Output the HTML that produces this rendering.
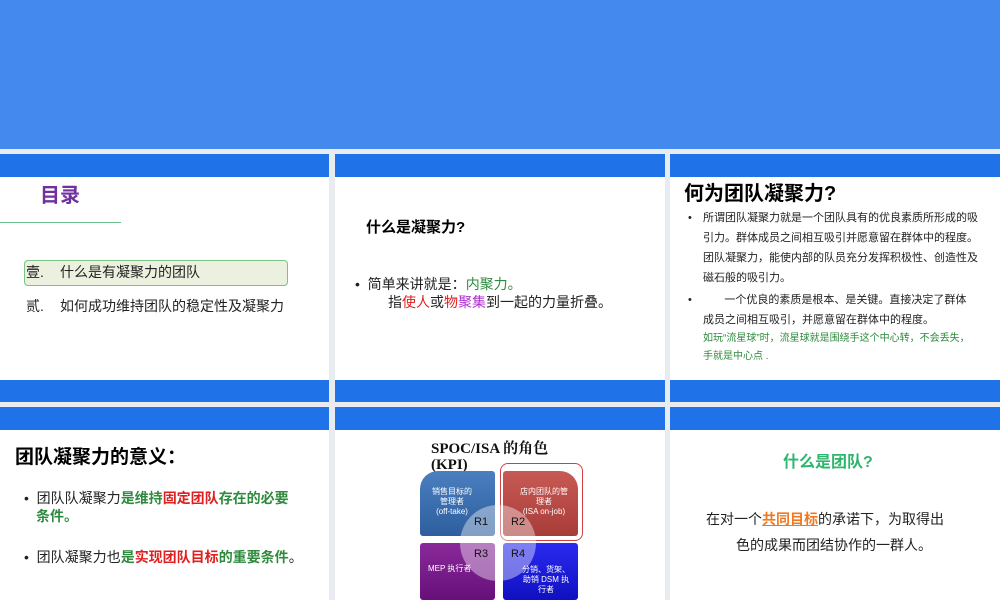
<!DOCTYPE html>
<html><head><meta charset="utf-8"><style>
*{margin:0;padding:0;box-sizing:border-box}
body{width:1000px;height:600px;position:relative;overflow:hidden;background:#e8ecf1;font-family:"Liberation Sans","Noto Sans CJK SC",sans-serif;color:#222}
div,span.a{position:absolute}
.bar{background:#1f72e8}
.w{background:#fff}
.t{white-space:nowrap;line-height:1}
.g{color:#2e8b3e}.r{color:#e02020}.p{color:#b030d0}
</style></head><body>
<div style="left:0;top:0;width:1000px;height:149px;background:#4489ee"></div>
<div class="bar" style="left:0;top:154px;width:329px;height:23px"></div>
<div class="bar" style="left:335px;top:154px;width:330px;height:23px"></div>
<div class="bar" style="left:670px;top:154px;width:330px;height:23px"></div>
<div class="w" style="left:0;top:177px;width:329px;height:203px"></div>
<div class="w" style="left:335px;top:177px;width:330px;height:203px"></div>
<div class="w" style="left:670px;top:177px;width:330px;height:203px"></div>
<div class="bar" style="left:0;top:380px;width:329px;height:22px"></div>
<div class="bar" style="left:335px;top:380px;width:330px;height:22px"></div>
<div class="bar" style="left:670px;top:380px;width:330px;height:22px"></div>
<div class="bar" style="left:0;top:407px;width:329px;height:23px"></div>
<div class="bar" style="left:335px;top:407px;width:330px;height:23px"></div>
<div class="bar" style="left:670px;top:407px;width:330px;height:23px"></div>
<div class="w" style="left:0;top:430px;width:329px;height:170px"></div>
<div class="w" style="left:335px;top:430px;width:330px;height:170px"></div>
<div class="w" style="left:670px;top:430px;width:330px;height:170px"></div>

<div class="t" style="left:40px;top:186px;font-size:20px;font-weight:bold;color:#7030a0">目录</div>
<div style="left:0;top:222px;width:121px;height:1px;background:#6cc090"></div>
<div style="left:24px;top:260px;width:264px;height:26px;background:#ebf1de;border:1px solid #7cc282;border-radius:4px"></div>
<div class="t" style="left:26px;top:265px;font-size:14px">壹.</div>
<div class="t" style="left:60px;top:265px;font-size:14px">什么是有凝聚力的团队</div>
<div class="t" style="left:26px;top:299px;font-size:14px">贰.</div>
<div class="t" style="left:60px;top:299px;font-size:14px">如何成功维持团队的稳定性及凝聚力</div>

<div class="t" style="left:366px;top:220px;font-size:15px;font-weight:bold;color:#000">什么是凝聚力?</div>
<div class="t" style="left:355px;top:277px;font-size:14px">•&nbsp; 简单来讲就是：<span class="g">内聚力。</span></div>
<div class="t" style="left:388px;top:295px;font-size:14px">指<span class="r">使人</span>或<span class="r">物</span><span class="p">聚集</span>到一起的力量折叠。</div>

<div class="t" style="left:684px;top:184px;font-size:20px;font-weight:bold;color:#000">何为团队凝聚力?</div>
<div style="left:688px;top:208px;font-size:11px;line-height:20px;width:300px">
<div style="left:0;top:0;line-height:20px">•</div>
<div class="t" style="left:15px;top:0;line-height:20px">所谓团队凝聚力就是一个团队具有的优良素质所形成的吸<br>引力。群体成员之间相互吸引并愿意留在群体中的程度。<br>团队凝聚力，能使内部的队员充分发挥积极性、创造性及<br>磁石般的吸引力。</div>
<div style="left:0;top:82px;line-height:20px">•</div>
<div class="t" style="left:15px;top:82px;line-height:20px">&nbsp;&nbsp;&nbsp;&nbsp;&nbsp;&nbsp;&nbsp;一个优良的素质是根本、是关键。直接决定了群体<br>成员之间相互吸引，并愿意留在群体中的程度。</div>
<div class="t" style="left:15px;top:122px;font-size:10px;line-height:18px;color:#2e8b3e">如玩“流星球”时，流星球就是围绕手这个中心转，不会丢失，<br>手就是中心点 .</div>
</div>

<div class="t" style="left:15px;top:448px;font-size:19px;font-weight:bold;color:#000">团队凝聚力的意义：</div>
<div class="t" style="left:24px;top:491px;font-size:14px">•&nbsp; 团队队凝聚力<b class="g">是维持</b><b class="r">固定团队</b><b class="g">存在的必要</b></div>
<div class="t" style="left:36px;top:509px;font-size:14px"><b class="g">条件。</b></div>
<div class="t" style="left:24px;top:550px;font-size:14px">•&nbsp; 团队凝聚力也<b class="g">是</b><b class="r">实现团队目标</b><b class="g">的重要条件</b>。</div>

<div class="t" style="left:431px;top:442px;font-size:15px;font-weight:bold;font-family:'Liberation Serif','Noto Serif CJK SC',serif;color:#111">SPOC/ISA 的角色</div>
<div class="t" style="left:431px;top:458px;font-size:15px;font-weight:bold;font-family:'Liberation Serif','Noto Serif CJK SC',serif;color:#111">(KPI)</div>
<div style="left:500px;top:463px;width:83px;height:78px;border:1px solid #d04040;border-radius:8px"></div>
<div style="left:420px;top:471px;width:75px;height:65px;background:linear-gradient(#4a7fc0,#2e5e9e);border-radius:18px 3px 3px 3px"></div>
<div style="left:503px;top:471px;width:75px;height:65px;background:linear-gradient(#c85a55,#a83c38);border-radius:3px 18px 3px 3px"></div>
<div style="left:420px;top:543px;width:75px;height:57px;background:linear-gradient(#8a2a9a,#66107a);border-radius:3px"></div>
<div style="left:503px;top:543px;width:75px;height:57px;background:linear-gradient(#2a2af0,#1010c0);border-radius:3px"></div>
<div style="left:460px;top:505px;width:76px;height:76px;border-radius:50%;background:rgba(255,255,255,0.4)"></div>
<div style="left:420px;top:487px;width:64px;text-align:center;font-size:8px;line-height:10px;color:#fff">销售目标的<br>管理者<br>(off-take)</div>
<div style="left:512px;top:487px;width:64px;text-align:center;font-size:8px;line-height:10px;color:#fff">店内团队的管<br>理者<br>(ISA on-job)</div>
<div class="t" style="left:428px;top:565px;font-size:8px;color:#fff">MEP 执行者</div>
<div style="left:515px;top:565px;width:62px;text-align:center;font-size:8px;line-height:10px;color:#fff">分销、货架、<br>助销 DSM 执<br>行者</div>
<div class="t" style="left:474px;top:517px;font-size:11px;color:#111">R1</div>
<div class="t" style="left:511px;top:517px;font-size:11px;color:#111">R2</div>
<div class="t" style="left:474px;top:549px;font-size:11px;color:#111">R3</div>
<div class="t" style="left:511px;top:549px;font-size:11px;color:#111">R4</div>

<div class="t" style="left:783px;top:455px;font-size:16px;font-weight:bold;color:#2fb56e">什么是团队?</div>
<div class="t" style="left:706px;top:512px;font-size:14px">在对一个<b style="color:#f07820;text-decoration:underline">共同目标</b>的承诺下，为取得出</div>
<div class="t" style="left:736px;top:538px;font-size:14px">色的成果而团结协作的一群人。</div>
</body></html>
